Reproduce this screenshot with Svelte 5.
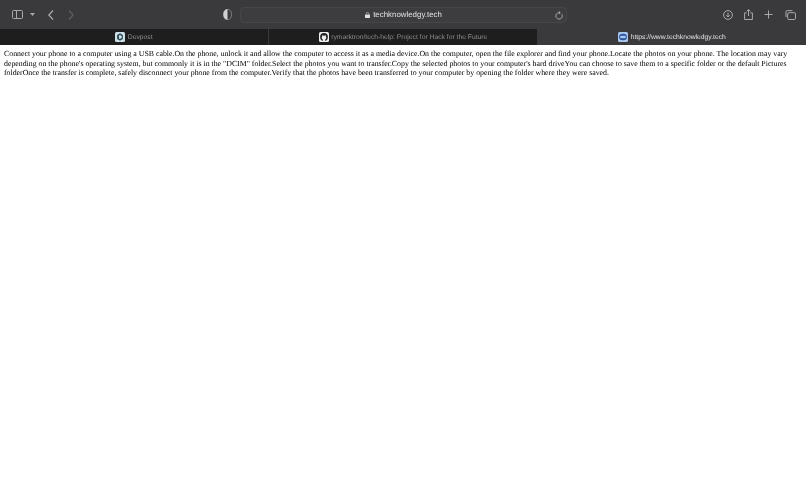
<script>
  const tabs = [
    { title: 'Devpost', icon: 'devpost' },
    { title: 'rymarktron/tech-help: Project for Hack for the Future', icon: 'github' },
    { title: 'https://www.techknowledgy.tech', icon: 'site', active: true }
  ];

  const steps = `Connect your phone to a computer using a USB cable.On the phone, unlock it and allow the computer to access it as a media device.On the computer, open the file explorer and find your phone.Locate the photos on your phone. The location may vary depending on the phone's operating system, but commonly it is in the "DCIM" folder.Select the photos you want to transfer.Copy the selected photos to your computer's hard driveYou can choose to save them to a specific folder or the default Pictures folderOnce the transfer is complete, safely disconnect your phone from the computer.Verify that the photos have been transferred to your computer by opening the folder where they were saved.`;
</script>

<div class="window">
  <header class="toolbar">
    <div class="left">
      <svg class="icon sidebar" width="11" height="9" viewBox="0 0 11 9">
        <rect x="0.5" y="0.5" width="10" height="8" rx="1" />
        <path d="M4.500 .5v8" />
      </svg>
      <svg class="chevron" width="5" height="3" viewBox="0 0 5 3"><path d="M0 0H5L2.500 3Z" fill="#a9a9aa" /></svg>
      <svg class="icon back" width="6" height="10" viewBox="0 0 6 10"><path d="M5 .5.8 5 5 9.500" /></svg>
      <svg class="icon forward" width="6" height="10" viewBox="0 0 6 10"><path d="M1 .5 5.200 5 1 9.500" /></svg>
    </div>
    <svg class="shield" width="9" height="11" viewBox="0 0 9 11">
      <path d="M4.500.3C7 .3 8.600 2.500 8.600 5.500S7 10.700 4.500 10.700.4 8.500.4 5.500 2 .3 4.500.3Z" fill="#3a3a3c" stroke="#8f8f91" stroke-width=".8" />
      <path d="M4.500.3V10.700C2 10.700.4 8.500.4 5.500S2 .3 4.500.3Z" fill="#cfcfcf" />
    </svg>
    <div class="address">
      <span class="host">
        <svg width="5" height="6" viewBox="0 0 5 6">
          <path d="M1.200 2.600V1.800a1.300 1.300 0 0 1 2.600 0v.8" fill="none" stroke="#ddd" stroke-width=".6" />
          <rect y="2.500" width="5" height="3.500" rx=".6" fill="#ddd" />
        </svg>
        techknowledgy.tech
      </span>
      <svg class="icon reload" width="8" height="9" viewBox="0 0 8 9">
        <path d="M6.800 3.200A3.200 3.200 0 1 1 4 1.700h1" /><path d="M3.900.4 5.300 1.700 3.900 3" />
      </svg>
    </div>
    <div class="right">
      <svg class="icon" width="10" height="10" viewBox="0 0 10 10">
        <circle cx="5" cy="5" r="4.400" /><path d="M5 2.600v4.400M3.200 5.300 5 7l1.800-1.700" />
      </svg>
      <svg class="icon" width="9" height="11" viewBox="0 0 9 11">
        <path d="M2.600 3.900H.6v6.600h7.800V3.900h-2M4.500 7V.7M2.700 2.300 4.500.6l1.800 1.700" />
      </svg>
      <svg class="icon" width="9" height="9" viewBox="0 0 9 9"><path d="M4.500.5v8M.5 4.500h8" /></svg>
      <svg class="icon" width="11" height="10" viewBox="0 0 11 10">
        <rect x="2.700" y="2.700" width="7.800" height="6.800" rx="1.200" />
        <path d="M1 7V1.800C1 1 1.400.6 2.200.6H7.500" />
      </svg>
    </div>
  </header>

  <nav class="tabs">
    {#each tabs as tab}
      <div class="tab" class:active={tab.active}>
        {#if tab.icon === 'devpost'}
          <svg width="10" height="10" viewBox="0 0 10 10">
            <rect width="10" height="10" rx="1.500" fill="#cfe0e6" />
            <path d="M5 1.200 7.900 3v4L5 8.800 2.100 7V3Z" fill="#2b4a57" />
            <path d="M4 3.200h1.100a1.800 1.800 0 0 1 0 3.600H4Z" fill="#cfe0e6" />
          </svg>
        {:else if tab.icon === 'github'}
          <svg width="10" height="10" viewBox="0 0 10 10">
            <rect width="10" height="10" rx="1.500" fill="#eee" />
            <circle cx="5" cy="5" r="3.900" fill="#222" />
            <path d="M3.900 9V7.600C3 7.200 2.700 6.600 2.700 5.600c0-.5.2-.9.4-1.200-.1-.4 0-.9.1-1.100.4 0 .8.2 1.100.4a3 3 0 0 1 1.400 0c.3-.2.7-.4 1.100-.4.1.2.2.7.1 1.100.2.3.4.7.4 1.200 0 1-.3 1.600-1.200 2V9Z" fill="#eee" />
          </svg>
        {:else}
          <svg width="10" height="10" viewBox="0 0 10 10">
            <rect width="10" height="10" rx="1.500" fill="#a9c6ee" />
            <ellipse cx="5" cy="5" rx="3.900" ry="3.200" fill="#27509a" />
            <rect x="2.200" y="3.800" width="5.600" height="2.400" rx="1" fill="#a9c6ee" />
          </svg>
        {/if}
        <span>{tab.title}</span>
      </div>
    {/each}
  </nav>

  <main class="content">{steps}</main>
</div>

<style>
  :global(body) {
    margin: 0;
    background: #fff;
  }

  .window {
    min-height: 504px;
    background: #fff;
    overflow: hidden;
    filter: blur(0.3px);
    text-rendering: geometricPrecision;
  }

  .toolbar {
    height: 29px;
    box-sizing: border-box;
    background: #3a3a3c;
    display: flex;
    align-items: center;
    font-family: 'Liberation Sans', sans-serif;
  }

  .icon {
    fill: none;
    stroke: #a9a9aa;
    stroke-width: 1;
    display: block;
  }

  .left {
    display: flex;
    align-items: center;
    width: 223px;
    padding-left: 12px;
    box-sizing: border-box;
  }

  .chevron {
    display: block;
    margin-left: 6.500px;
  }

  .back {
    margin-left: 13.200px;
    stroke-width: 1.200;
  }

  .forward {
    margin-left: 14px;
    stroke: #5f5f61;
    stroke-width: 1.200;
  }

  .shield {
    display: block;
  }

  .address {
    margin-left: 8px;
    width: 327px;
    height: 16px;
    box-sizing: border-box;
    border: 1px solid #464648;
    border-radius: 4px;
    background: #3d3d3f;
    display: flex;
    align-items: center;
    justify-content: center;
    position: relative;
  }

  .host {
    color: #e0e0e0;
    font-size: 7.900px;
    display: flex;
    align-items: center;
    gap: 3px;
  }

  .reload {
    position: absolute;
    right: 3px;
    top: 3px;
  }

  .right {
    margin-left: auto;
    padding-right: 10.500px;
    display: flex;
    align-items: center;
    gap: 11.300px;
  }

  .tabs {
    height: 16px;
    display: flex;
    background: #1e1e1f;
    font-family: 'Liberation Sans', sans-serif;
    font-size: 6.760px;
    color: #8b8b8c;
  }

  .tab {
    flex: 1;
    display: flex;
    align-items: center;
    justify-content: center;
    gap: 2.500px;
    border-right: 1px solid #3a3a3c;
  }

  .tab:last-child {
    border-right: none;
  }

  .tab.active {
    background: #3a3a3c;
    color: #e2e2e2;
  }

  .content {
    display: block;
    padding: 4px 14px 0 4px;
    font-family: 'Liberation Serif', serif;
    font-size: 7.840px;
    line-height: 9.500px;
    color: #000;
  }
</style>
